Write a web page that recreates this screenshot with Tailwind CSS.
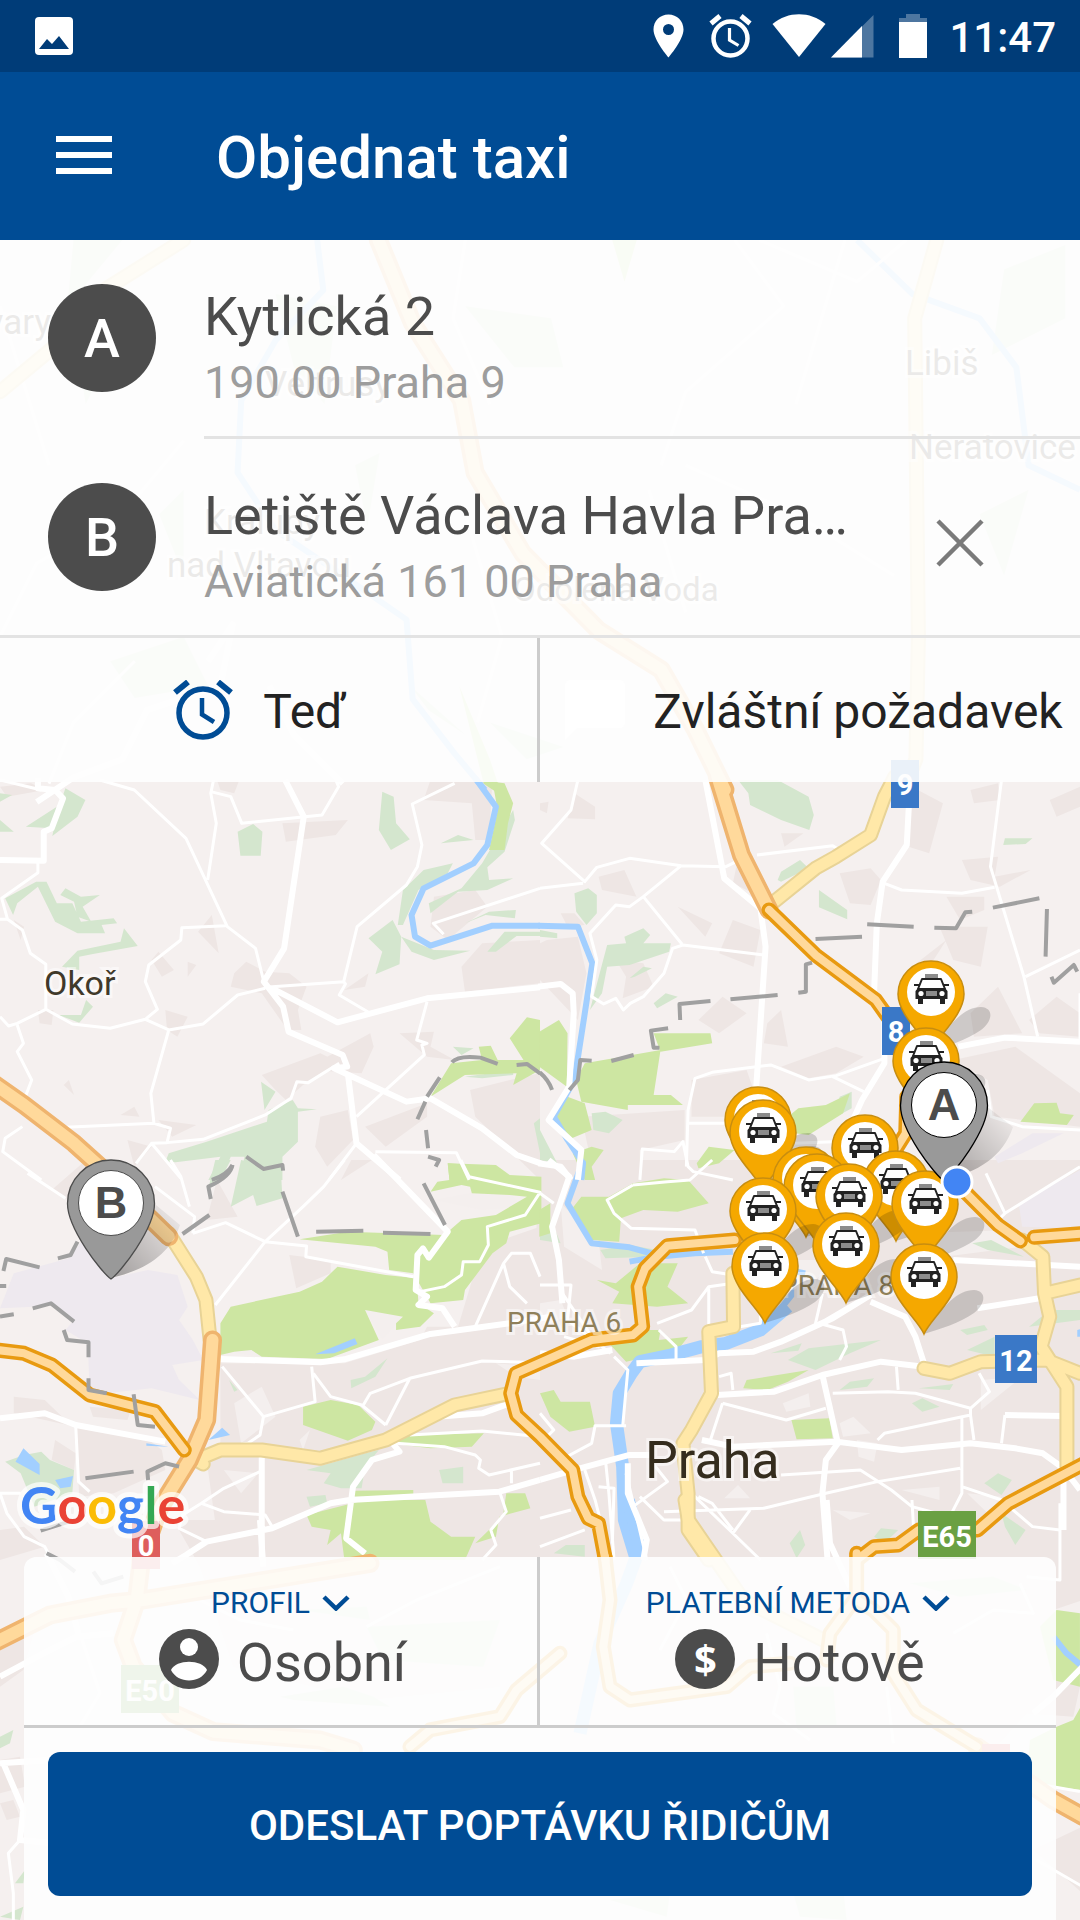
<!DOCTYPE html>
<html lang="cs">

<head>
    <meta charset="UTF-8">
    <meta name="viewport" content="width=device-width, initial-scale=1.0">
    <title>Objednat taxi</title>
    <script src="https://cdn.jsdelivr.net/npm/@tailwindcss/browser@4"></script>
</head>

<body class="flex min-h-screen flex-col font-['Roboto',sans-serif] text-[#4c4c4c]">

    <!-- status bar -->
    <div class="flex h-[72px] items-center bg-[#003c78] pr-6 pl-[35px] text-white">
        <svg class="h-[38px] w-[38px]" viewBox="0 0 38 38">
            <rect width="38" height="38" rx="4" fill="#fff" />
            <path d="M4 32L12 22L17 27L24 19L34 32Z" fill="#003c78" />
        </svg>
        <div class="ml-auto flex items-center">
            <svg class="h-11 w-[31px]" viewBox="0 0 31 44">
                <path fill="#fff" fill-rule="evenodd"
                    d="M15.500 .5C7 .5 .5 7 .5 15.500C.5 26 15.500 43.500 15.500 43.500S30.500 26 30.500 15.500C30.500 7 24 .5 15.500 .5ZM15.500 10A5.500 5.500 0 1 1 15.500 21A5.500 5.500 0 1 1 15.500 10Z" />
            </svg>
            <svg class="ml-[25px] h-11 w-[43px]" viewBox="0 0 43 44" fill="none" stroke="#fff">
                <circle cx="21.500" cy="24.500" r="17" stroke-width="4.500" />
                <path d="M2 9.500L11 2M41 9.500L32 2" stroke-width="5" />
                <path d="M20.500 14V26L29.500 31.500" stroke-width="3.200" />
            </svg>
            <svg class="ml-5 h-11 w-[54px]" viewBox="0 0 54 44">
                <path d="M.5 10C16 -3 38 -3 53.500 10L27 43Z" fill="#fff" />
            </svg>
            <svg class="ml-1 h-11 w-[44px]" viewBox="0 0 44 44">
                <path d="M1 43.500L43.500 1V43.500Z" fill="#fff" fill-opacity=".3" />
                <path d="M1 43.500L32 12V43.500Z" fill="#fff" />
            </svg>
            <svg class="ml-[25px] h-11 w-7" viewBox="0 0 28 44">
                <path d="M7 0H21V4H28V9H0V4H7Z" fill="#fff" fill-opacity=".3" />
                <path d="M0 8H28V44H0Z" fill="#fff" />
            </svg>
            <span class="ml-[22px] pt-1 text-[42px] leading-[48px] font-medium">11:47</span>
        </div>
    </div>

    <!-- app bar -->
    <header class="flex h-[168px] items-center bg-[#004c95] px-14 text-white">
        <button type="button" aria-label="Menu" class="flex w-14 flex-col gap-[10px] pb-[2px]">
            <span class="h-[6px] w-full bg-white"></span>
            <span class="h-[6px] w-full bg-white"></span>
            <span class="h-[6px] w-full bg-white"></span>
        </button>
        <h1 class="ml-[104px] pt-1 text-[60px] leading-[72px] font-medium">Objednat taxi</h1>
    </header>

    <main class="relative flex flex-1 flex-col justify-between overflow-hidden bg-[#f5f0ef]">
        <svg id="map" class="absolute inset-0 h-full w-full" viewBox="0 240 1080 1680"
            preserveAspectRatio="xMidYMin slice" role="img" aria-label="Mapa">
            <defs>
                <g id="shadow">
                    <path d="M0 0C20 -30 34 -44 50 -44C64 -43 61 -29 50 -21C36 -11 16 -5 0 0Z" fill="#000"
                        fill-opacity=".16" />
                </g>
                <g id="taxi">
                    <path d="M0 0C-6 -14 -33 -36 -33 -57A33 33 0 0 1 33 -57C33 -36 6 -14 0 0Z" fill="#f5a800"
                        stroke="#c78d10" stroke-width="1.500" />
                    <circle cy="-59" r="24" fill="#fff" />
                    <path d="M-6 -77H7V-73H-6Z" fill="#8c8c8c" />
                    <path d="M-9 -72H10L14 -62H-13Z" fill="#fff" stroke="#222" stroke-width="2" stroke-linejoin="round" />
                    <path d="M-17 -67H-12V-65H-17ZM13 -67H18V-65H13Z" fill="#222" />
                    <path
                        d="M-13 -63H14L16.500 -60V-52H14V-47H9V-52H-8V-47H-13V-52H-15.500V-60Z"
                        fill="#222" />
                    <path d="M-5 -60H6V-55H-5Z" fill="#8c8c8c" />
                    <circle cx="-10" cy="-57.500" r="2.600" fill="#fff" />
                    <circle cx="11" cy="-57.500" r="2.600" fill="#fff" />
                </g>
                <g id="pin">
                    <path
                        d="M0 0C-9 -6 -43.500 -50 -43.500 -75.500A43.500 43.500 0 0 1 43.500 -75.500C43.500 -50 9 -6 0 0Z"
                        fill="#999" stroke-width="1.300" />
                    <circle cy="-76" r="32.500" fill="#fff" />
                </g>
                <linearGradient id="fade" x1="0" y1="1" x2="1" y2="0">
                    <stop offset="0" stop-color="#000" stop-opacity=".35" />
                    <stop offset="1" stop-color="#000" stop-opacity="0" />
                </linearGradient>
            </defs>

            <g id="land"></g>
            <g id="roads" fill="none" stroke-linejoin="round"></g>

            <!-- road shields -->
            <g class="font-bold" font-size="29" fill="#fff" text-anchor="middle">
                <path d="M891 760h28v48h-28zM882 1007h28v48h-28zM995 1335h42v48h-42z" fill="#3a78c7" />
                <path d="M918 1511h58v48h-58zM121 1665h58v48h-58z" fill="#6aa043" />
                <path d="M132 1521h28v48h-28zM982 1744h28v48h-28z" fill="#de5e5c" />
                <text x="905" y="795">9</text>
                <text x="896" y="1042">8</text>
                <text x="1016" y="1371">12</text>
                <text x="947" y="1547">E65</text>
                <text x="150" y="1701">E50</text>
                <text x="146" y="1556">0</text>
            </g>

            <!-- place names -->
            <g font-size="35" fill="#40392a" stroke="#fff" stroke-opacity=".5" stroke-width="6" paint-order="stroke">
                <text x="-22" y="334">lvary</text>
                <text x="265" y="396">Veltrusy</text>
                <text x="905" y="375">Libiš</text>
                <text x="909" y="459">Neratovice</text>
                <text x="204" y="534">Kralupy</text>
                <text x="167" y="577">nad Vltavou</text>
                <text x="513" y="601" font-size="33">Odolena Voda</text>
                <text x="44" y="995" font-size="34">Okoř</text>
                <text x="645" y="1478" font-size="52" fill="#352d1e">Praha</text>
                <text x="507" y="1332" font-size="28" fill="#8f8059">PRAHA 6</text>
                <text x="780" y="1295" font-size="28" fill="#8f8059">PRAHA 8</text>
            </g>

            <text x="20" y="1524" font-size="52" stroke="#fff" stroke-opacity=".7" stroke-width="10"
                stroke-linejoin="round" paint-order="stroke" class="font-['Lato',sans-serif] font-bold"><tspan
                    fill="#4285f4">G</tspan><tspan fill="#ea4335">o</tspan><tspan fill="#fbbc05">o</tspan><tspan
                    fill="#4285f4">g</tspan><tspan fill="#34a853">l</tspan><tspan fill="#ea4335">e</tspan></text>

            <g id="taxis"></g>

            <!-- start and destination -->
            <g font-size="45" fill="#4c4c4c" text-anchor="middle" class="font-['Liberation_Sans',sans-serif] font-bold">
                <path d="M111 1278C135 1245 140 1225 150 1200L180 1225C170 1255 145 1270 111 1278Z"
                    fill="url(#fade)" />
                <path d="M944 1180C968 1147 975 1127 985 1105L1013 1127C1003 1157 978 1172 944 1180Z"
                    fill="url(#fade)" />
                <use href="#pin" x="111" y="1279" stroke="#4c4c4c" />
                <text x="111" y="1218">B</text>
                <use href="#pin" x="944" y="1181" stroke="#000" />
                <text x="944" y="1120">A</text>
            </g>
            <circle cx="957" cy="1182" r="15" fill="#4285f4" stroke="#fff" stroke-width="3" />
        </svg>

        <!-- route -->
        <section class="relative bg-[#fefefe]/90">
            <div class="flex pl-12">
                <span
                    class="mt-11 flex h-[108px] w-[108px] shrink-0 items-center justify-center rounded-full bg-[#4c4c4c] text-[54px] font-medium text-white">A</span>
                <button type="button"
                    class="ml-12 h-[199px] min-w-0 flex-1 border-b-3 border-[#e3e3e3] pt-11 pb-[23px] text-left">
                    <span class="block truncate text-[54px] leading-[66px]">Kytlická 2</span>
                    <span class="block truncate text-[45px] leading-[66px] text-[#9d9d9d]">190 00 Praha 9</span>
                </button>
            </div>
            <div class="flex border-b-3 border-[#e3e3e3] pl-12">
                <span
                    class="mt-11 flex h-[108px] w-[108px] shrink-0 items-center justify-center rounded-full bg-[#4c4c4c] text-[54px] font-medium text-white">B</span>
                <button type="button" class="ml-12 h-[196px] min-w-0 flex-1 pt-11 pb-5 text-left">
                    <span class="block truncate text-[54px] leading-[66px]">Letiště Václava Havla Praha</span>
                    <span class="block truncate text-[45px] leading-[66px] text-[#9d9d9d]">Aviatická 161 00 Praha</span>
                </button>
                <button type="button" aria-label="Smazat cíl"
                    class="flex w-[228px] shrink-0 items-center justify-center pt-3 pr-3">
                    <svg class="h-12 w-12" viewBox="0 0 48 48" fill="none" stroke="#7a7a7a" stroke-width="4.500">
                        <path d="M2 2L46 46M46 2L2 46" />
                    </svg>
                </button>
            </div>
            <div class="grid grid-cols-2 text-[48px] leading-[60px] text-[#222]">
                <button type="button"
                    class="flex h-36 items-center justify-center gap-[30px] border-r-3 border-[#ccc] pr-[18px]">
                    <svg class="h-[60px] w-[60px]" viewBox="0 0 60 60" fill="none" stroke="#004c95">
                        <circle cx="30" cy="33" r="24" stroke-width="5.500" />
                        <path d="M2 12.500L15 2M58 12.500L45 2" stroke-width="6" />
                        <path d="M29 18V34.500L41 42" stroke-width="4.500" />
                    </svg>
                    <span class="pt-1">Teď</span>
                </button>
                <button type="button" class="flex h-36 items-center justify-center gap-[28px] pl-2 whitespace-nowrap">
                    <svg class="h-[60px] w-[60px]" viewBox="0 0 60 60" fill="#fff">
                        <path d="M6 0H54Q60 0 60 6V42Q60 48 54 48H12L0 60V6Q0 0 6 0Z" />
                    </svg>
                    <span class="pt-1">Zvláštní požadavek</span>
                </button>
            </div>
        </section>

        <!-- order card -->
        <section class="relative mx-6 rounded-t-xl bg-[#fefefe]/90">
            <div class="grid grid-cols-2 border-b-3 border-[#ccc]">
                <button type="button" class="flex h-[168px] flex-col items-center border-r-3 border-[#ccc] pt-7">
                    <span class="flex items-center gap-3 text-[30px] leading-9 text-[#004c95]">PROFIL
                        <svg class="h-4 w-7" viewBox="0 0 28 16" fill="none" stroke="#004c95" stroke-width="4.500">
                            <path d="M2 2L14 13.500L26 2" />
                        </svg>
                    </span>
                    <span class="mt-1 flex items-center gap-[18px] pl-1 text-[54px] leading-[60px]">
                        <svg class="h-[60px] w-[60px]" viewBox="0 0 60 60">
                            <circle cx="30" cy="30" r="30" fill="#4c4c4c" />
                            <circle cx="30" cy="18" r="9" fill="#fff" />
                            <path d="M12 41C17 30 43 30 48 41C41 55 19 55 12 41Z" fill="#fff" />
                        </svg>
                        <span class="pt-2">Osobní</span>
                    </span>
                </button>
                <button type="button" class="flex h-[168px] flex-col items-center pt-7">
                    <span class="flex items-center gap-3 text-[30px] leading-9 text-[#004c95]">PLATEBNÍ METODA
                        <svg class="h-4 w-7" viewBox="0 0 28 16" fill="none" stroke="#004c95" stroke-width="4.500">
                            <path d="M2 2L14 13.500L26 2" />
                        </svg>
                    </span>
                    <span class="mt-1 flex items-center gap-[18px] pl-1 text-[54px] leading-[60px]">
                        <span
                            class="flex h-[60px] w-[60px] items-center justify-center rounded-full bg-[#4c4c4c] font-['Open_Sans',sans-serif] text-[40px] font-bold text-white">$</span>
                        <span class="pt-2">Hotově</span>
                    </span>
                </button>
            </div>
            <div class="p-6">
                <button type="button"
                    class="h-36 w-full rounded-xl bg-[#004c95] pt-1 text-[42px] leading-[48px] font-medium text-white">ODESLAT
                    POPTÁVKU ŘIDIČŮM</button>
            </div>
        </section>
    </main>

</body>
<script>
    let land = document.querySelector("#land")
    let roads = document.querySelector("#roads")
    let taxis = document.querySelector("#taxis")

    // the map is cut into sheets, each with its own grid
    let sheets = {
        top: "translate(0 0) scale(1.2245)",
        nw: "translate(0 780) scale(.3444 .3333)",
        ne: "translate(540 780) scale(.3444 .3333)",
        sw: "translate(0 1160) scale(.3444 .3333)",
        se: "translate(540 1160) scale(.3444 .3333)",
        bl: "translate(0 1500) scale(.3333)",
        br: "translate(560 1500) scale(.3333)"
    }

    let areas = [
        ["#eee6e4", {
            nw: "M680 580L715 545L770 575L840 580L890 620L865 690L875 750L835 750L760 640L670 620ZM1340 560L1400 490L1568 480L1568 610L1350 635ZM950 830L1075 760L1085 800L1050 880L900 870ZM760 885L930 820L990 850L880 915L830 960L800 930ZM1365 930L1520 890L1568 880L1568 1200L1380 1010ZM930 1010L1010 990L1025 1080L950 1160L915 1100ZM1250 0L1430 0L1420 180L1380 180L1370 70L1230 60ZM1250 440L1260 350L1380 330L1415 380L1300 480ZM0 20L90 10L130 30L20 50ZM1060 1040L1240 970L1240 1010L1120 1100ZM830 185L820 130L1010 120L975 165ZM480 690L545 710L515 770L485 750ZM575 455L615 405L635 520ZM370 1080L440 1100L390 1160ZM545 545L570 555L545 590ZM440 540L460 515L505 570L470 590ZM185 915L200 900L215 945ZM350 1005L390 980L405 1010ZM1160 760L1260 755L1250 800L1320 840L1240 830ZM110 690L155 690L150 735L115 730ZM630 0L695 0L680 40L640 30ZM460 1020L570 1035L500 1070ZM40 420L70 440L60 480ZM1000 630L1070 580L1060 620Z",
            ne: "M870 280L960 265L990 300L960 375L900 370ZM1225 240L1330 230L1320 290L1425 270L1335 320L1250 300ZM1060 10L1170 70L1130 220L1070 200ZM1250 30L1330 10L1335 60L1260 70ZM700 160L765 160L710 200ZM1180 350L1290 350L1290 390L1220 420ZM220 540L300 550L330 620L240 655L250 590ZM60 400L100 400L130 435L80 440ZM20 480L110 470L135 580L110 720L0 600L0 490ZM100 40L160 80L160 118L80 115ZM170 290L245 270L280 350L180 330ZM1160 440L1300 440L1280 560L1200 540ZM1250 700L1330 620L1400 760L1260 770ZM660 730L700 690L720 800L650 790ZM700 860L860 800L940 830L860 880L780 895ZM1200 840L1380 800L1568 940L1568 1040L1320 1010L1300 900ZM440 900L600 870L620 930L540 1010L440 1010ZM120 1010L420 990L420 1080L290 1110L290 1200L160 1200ZM560 420L640 450L620 560L520 520ZM1420 720L1500 650L1568 700L1568 770L1450 760ZM1480 60L1568 20L1568 80L1500 110ZM1080 560L1180 480L1130 560ZM570 260L640 350L560 310ZM400 380L500 430L480 470ZM460 720L530 650L600 700L520 760ZM0 70L25 65L20 100L0 90Z",
            sw: "M640 610L1000 610L1220 540L1240 500L1330 500L1400 260L1568 200L1568 1200L640 1200L600 900L640 870ZM840 285L960 300L960 340L860 385ZM250 0L310 0L200 120L150 90ZM1020 0L1080 0L990 60ZM630 60L690 170L600 180ZM40 710L130 720L200 790L420 830L470 870L480 930L330 1000L230 1010L220 800L40 760ZM160 840L220 880L215 930L150 900ZM70 1100L130 1160L0 1200L0 1110ZM260 740L380 750L370 780L270 770Z",
            se: "M-10 0L1568 0L1568 1200L-10 1200Z",
            bl: "M0 560L70 510L100 400L0 440ZM0 780L60 770L75 860L0 880ZM0 910L40 900L60 950L20 960ZM520 60L1500 60L1500 560L1100 600L700 500L600 200Z",
            br: "M0 100L1568 0L1568 300L1480 330L1560 560L1540 650L1400 640L1300 750L0 750ZM1420 1050L1568 980L1568 1180L1500 1120Z"
        }],
        ["#f4efee", {
            sw: "M1260 120L1460 80L1520 140L1400 150ZM680 730L760 680L800 770L700 850ZM870 840L900 810L880 870ZM1440 610L1568 620L1568 660L1500 650ZM680 580L740 565L765 590ZM1060 450L1170 470L1110 540ZM1000 870L1060 880L960 910ZM650 930L750 940L700 1000Z",
            se: "M705 730L780 700L785 740L715 755ZM870 790L910 770L960 820L880 830ZM535 1015L575 975L610 1015ZM1080 220L1380 210L1400 260L1100 300ZM60 130L170 240L180 330L70 260ZM920 840L980 850L970 905L925 890ZM1280 660L1400 650L1340 700L1280 750ZM1050 990L1160 980L1160 1020ZM850 1050L960 1060L900 1080ZM1240 1000L1340 1010L1300 1060ZM720 300L860 300L800 360L730 340ZM0 430L60 420L80 470L0 500Z"
        }],
        ["#eee9ef", {
            sw: "M0 445L40 340L200 295L240 240L320 355L430 330L515 345L545 440L520 480L560 540L590 600L500 615L520 660L580 720L440 685L310 700L260 690L255 550L190 510L215 480L150 430L100 440Z",
            ne: "M1320 1130L1430 1060L1520 1060L1400 1120L1330 1150Z",
            se: "M1390 130L1568 30L1568 205L1400 200Z"
        }],
        ["#d4e6ce", {
            top: "M60 270L90 290L70 330ZM225 240L275 250L265 330L240 300ZM380 250L450 260L460 300L420 300ZM820 220L870 200L870 260L810 290ZM290 380L310 370L300 430ZM130 420L150 400L150 470ZM800 420L840 400L820 470ZM90 540L150 520L170 560L110 570ZM335 560L380 600L350 580ZM400 590L460 610L430 620ZM55 250L60 196L100 196Z",
            nw: "M190 25L248 60L225 110L152 168L165 100ZM75 140L165 80L150 145ZM0 40L35 45L0 65ZM0 120L40 155L0 155ZM15 355L105 305L135 305L165 370L210 370L235 425L330 415L340 430L295 435L305 460L225 460L160 425L110 320L50 370L38 405ZM190 325L235 350L290 345L240 380L265 425L225 410L215 365L175 345ZM360 445L400 498L270 522L230 530L230 570L180 560L225 512L350 485ZM690 155L735 132L762 155L757 227L698 227ZM1110 35L1143 50L1150 130L1190 178L1135 210L1100 150ZM1170 330L1230 270L1315 250L1300 280L1215 330L1170 435L1155 435ZM1070 475L1140 420L1165 470L1160 553L1090 583L1110 515ZM1245 370L1340 325L1400 250L1490 90L1495 120L1465 215L1415 262L1420 300L1490 295L1415 330L1330 335L1250 400ZM1165 470L1260 510L1365 512L1260 540L1195 515ZM1415 515L1465 455L1568 455L1568 468L1500 468L1440 515ZM758 905L800 935L768 990ZM480 1145L490 1120L600 1085L775 1025L780 990L850 960L865 985L920 988L865 995L865 1085L820 1130L820 1200L695 1200L710 1130L670 1130L640 1200L605 1200L640 1130L510 1147ZM170 705L235 705L250 660L270 680L230 728ZM1280 190L1330 165L1375 180ZM1350 430L1420 395L1498 390L1495 415L1410 405ZM1315 800L1375 805L1340 825ZM1350 890L1490 870L1490 885L1400 895ZM1550 1030L1568 1015L1568 1120Z",
            ne: "M575 0L690 0L780 50L795 105L782 150L700 120L610 75L605 40ZM100 340L140 325L165 345L165 400L135 435L105 395ZM145 690L195 495L250 490L245 470L300 445L320 465L300 490L380 490L375 515L260 555L195 560L180 640ZM690 300L700 275L755 240L780 265L700 305ZM810 330L892 390L892 418L810 382ZM1350 175L1430 175L1410 192L1345 195ZM260 595L300 560L325 565L275 590ZM330 670L365 640L400 650L340 685ZM150 1000L190 995L240 1020L200 1060L155 1050ZM870 950L905 935L905 985L860 1010ZM0 450L50 460L50 475L0 470ZM0 1050L50 1150L0 1140Z",
            sw: "M15 905L70 885L120 875L145 900L215 930L210 1000L100 1040L60 940ZM625 0L670 0L640 60L605 85ZM700 0L720 5L815 20L820 115L745 138L735 105L670 140ZM1018 660L1060 650L1125 595L1090 650L1020 685ZM890 930L1060 880L1100 870L1060 920L1050 985L990 985L940 970L960 940ZM1275 930L1345 920L1345 970L1285 970ZM890 1010L945 1005L950 1030L900 1040ZM665 660L690 690L680 695Z",
            se: "M175 270L260 255L340 270L330 290L190 295ZM1255 250L1310 240L1405 290L1300 270ZM720 600L780 565L990 540L900 580L800 630ZM870 690L900 665L970 655L950 680ZM1080 730L1110 715L1160 740L1110 755ZM1220 510L1290 495L1300 510L1240 525ZM1290 970L1330 940L1370 960L1340 1005ZM725 1150L755 1110L770 1155L745 1195ZM970 1130L990 1105L1040 1110L1000 1150ZM1340 1060L1410 1110L1380 1155L1350 1100ZM1420 500L1480 450L1568 450L1568 480ZM0 150L40 200L60 250L0 240ZM40 1180L75 1155L130 1155L130 1190ZM1100 685L1200 672L1190 690ZM1240 570L1320 530L1320 590ZM670 580L760 550L750 572ZM850 235L900 230L900 290L860 290Z",
            bl: "M0 710L40 690L30 730L0 745ZM45 1150L75 1110L70 1150ZM1100 380L1500 360L1450 500L1150 480ZM840 590L1030 560L1120 590L1170 620L880 600ZM0 1250L70 1220L60 1260ZM900 330L1100 320L1110 360Z",
            br: "M1050 250L1300 230L1400 270L1200 290ZM700 560L820 560L830 680L710 690ZM150 1200L330 1180L320 1250ZM700 1180L850 1170L860 1260L720 1250Z"
        }],
        ["#cde6a2", {
            top: "M500 196L520 196L510 230ZM375 560L400 620L410 650L395 640Z",
            nw: "M1430 5L1465 10L1490 70L1475 130L1465 210L1420 210L1445 90ZM1480 775L1530 712L1568 720L1568 870L1490 915L1500 880L1350 885L1250 950L1310 850L1400 840L1390 800L1425 797L1445 840L1520 840ZM1300 1150L1430 1160L1490 1200L1305 1200Z",
            ne: "M-2 755L55 720L80 760L78 920L-2 860ZM330 760L495 760L500 790L350 815ZM130 850L350 810L330 945L380 945L415 975L255 975L255 990L120 965L105 900ZM30 1030L80 950L130 970L150 1050L80 1080ZM95 1120L150 1100L185 1110L150 1160L160 1200L130 1200ZM720 1010L750 985L830 975L900 940L880 1000L780 1065L740 1060ZM455 1150L490 1100L565 1110L520 1150L460 1165ZM1395 1025L1435 970L1500 968L1510 1000L1550 1005L1530 1035Z",
            sw: "M640 490L670 440L870 395L935 365L980 320L1120 345L1210 355L1215 430L1260 460L1220 500L1150 510L1150 490L1170 470L1060 450L1100 540L950 597L760 590L730 570L680 575L640 585ZM870 238L1010 215L1290 225L1340 180L1440 165L1530 110L1480 105L1370 100L1365 80L1340 75L1250 95L1270 65L1305 60L1300 10L1440 15L1480 45L1572 50L1572 190L1480 215L1470 250L1430 280L1350 390L1345 420L1250 430L1200 340L1130 330L1125 275L1090 260ZM880 740L960 720L1040 735L1090 785L1080 810L1010 842L880 795ZM1130 850L1190 825L1405 820L1370 860L1250 865ZM1025 992L1200 990L1200 1010L1025 1010ZM890 1065L1060 1020L1235 1020L1250 1085L1310 1130L1380 1130L1350 1200L1000 1200L990 1120L950 1155L960 1110L905 1100ZM1380 1150L1460 1070L1470 1000L1525 1000L1540 1045L1450 1070L1440 1130Z",
            se: "M270 70L360 55L430 60L490 130L400 155L300 150L235 175L230 245L150 240L90 150L120 110L200 110ZM-2 150L30 130L30 220L-2 230ZM165 360L220 370L290 310L400 310L370 380L430 430L340 440L210 430L230 395ZM200 550L300 510L350 510L345 540L430 530L400 570L250 605ZM0 700L40 690L60 725L145 725L160 800L85 815L30 770ZM590 685L600 660L780 630L720 665L660 690ZM730 780L840 775L850 835L745 838Z",
            br: "M1490 330L1560 340L1560 560L1480 540L1440 380ZM1540 660L1568 610L1568 870L1400 850L1410 720L1490 680Z"
        }],
        ["#a2cfff", {
            sw: "M915 583L1030 535L1038 552L970 580ZM605 840L645 803L668 825ZM45 905L68 865L115 912L115 945ZM160 960L212 948L205 980L175 985ZM425 850L490 860L425 857Z",
            se: "M738 380L738 410L680 485L640 495L700 430ZM1560 510L1568 508L1568 530L1560 530Z"
        }]
    ]

    // [colour, width, casing colour, casing width, lines per sheet]
    let lines = [
        ["#a2cfff", 6, "", 0, {
            top: "M259 196L264 237L225 278L197 327L194 386L225 433L280 470L332 506L337 571L371 615L396 645M700 196L745 240L800 260L830 300L840 380L882 400",
            nw: "M1380 -5L1440 80L1415 195L1375 250L1230 325L1195 405L1205 470L1250 497L1430 437L1568 437",
            ne: "M-5 437L110 440L152 550L130 700L100 900L40 1010L80 1080L125 1150L120 1200",
            se: "M125 0L80 130L150 250L260 262L340 285M260 305L340 290L450 280L560 275M720 330L770 340",
            br: "M1480 410L1520 460L1568 500"
        }],
        ["#a2cfff", 13, "", 0, {
            se: "M720 440L640 510L540 550L470 560L380 585L290 605L265 640L230 700L222 790L240 920L245 1080L280 1200",
            br: "M205 0L240 140L200 250L120 430L60 700"
        }],
        ["#fff", 3, "", 0, {
            top: "M0 250L40 380M380 196L370 260L400 330M600 196L640 250L560 320L540 380M690 196L650 330M380 420L410 520L390 590M560 380L650 420L730 470M530 400L560 500M150 360L100 420L30 460L0 520M110 540L60 590L40 640M620 196L700 230L740 196",
            nw: "M290 0L390 30L540 175L660 440L742 505L766 605M620 0L612 40L628 130L603 300M612 35L670 50L702 130L935 105L983 20L975 0M1320 10L1197 72L1225 195L1212 260L1180 315L1037 440L998 605L1003 612L985 645L1075 700M770 622L998 605M655 437L528 443L525 480L432 555L422 605L457 688L422 718L490 750L590 732L690 645L770 625M422 718L320 745L210 732L133 688L50 730L25 738L0 710M0 418L22 418L65 450L88 520L133 553L133 688M110 245L110 278L5 355L22 418M50 735L68 790L50 815L92 900L70 960M490 750L438 940L447 1030L190 1042M447 1030L495 1045L485 1088L440 1090L395 1150M440 1090L525 1195M485 1088L590 1078L770 1005L845 955L862 905L895 908L985 850M1240 665L1210 780L1240 790L1225 795L1232 825L1035 1010M1568 325L1258 430L1288 463M1035 1090L955 1200M1090 1115L1325 1118L1362 1200M65 1040L15 1075L8 1115L120 1200M0 0L120 30",
            ne: "M110 0L90 90L5 190L130 305L165 262L260 235L410 257L540 260L570 245M630 225L850 197L870 210M0 325L125 310M410 257L300 350L260 380L220 375L145 460L165 540L150 650L185 672L220 655L242 690L262 670L300 650L360 580L385 505L415 495L650 525M300 350L412 492M1340 0L1308 260L1405 590L1445 770M1000 310L1050 330L1225 340L1320 322M1410 590L1568 510M425 1160L430 990L450 895L500 877L670 855L780 900L860 887L1000 835M850 890L940 935M430 1030L540 1030M290 1200L297 1107L390 1115L415 1085L430 1160L445 1175L560 1200M1300 930L1310 1010L1400 1040L1568 1050M740 1090L850 1085M1568 640L1568 780",
            sw: "M495 0L525 50L550 140M450 80L565 170L560 220M560 220L655 188L770 245L625 435M770 245L890 258L888 290L1200 350M770 245L880 140L940 80L1000 0M1338 0L1362 50L1568 97L1525 165L1415 200L1418 255L1393 305L1345 305L1340 345L1290 380L1220 395M80 40L190 115M645 620L765 770L915 725L905 620M765 770L755 825L720 850L600 870M910 640L960 710L1050 735L1120 795M1055 735L1075 700L1190 655L1400 603L1568 608M1190 655L1120 795M1190 825L1400 813L1568 830M1150 850L1290 860L1380 885L1395 900L1390 925L1420 945L1568 910M1380 500L1462 310L1485 280L1540 280L1568 350M1462 310L1480 380L1530 430M220 800L228 965L260 995M755 935L650 985L585 1030L530 1065L520 1105L600 1145M585 1030L650 1055L770 1065L790 1100M0 1000L60 1000M0 1000L20 1060L70 1130L130 1160L150 1200M1452 1000L1470 1055L1425 1110L1440 1155L1400 1200M1485 930L1485 970",
            se: "M270 75L370 65L435 60L500 0M270 75L195 120L215 160L265 205L450 210L475 280M0 375L90 375L80 480L205 580M65 400L170 560L70 530M340 490L440 450L490 380L560 370M345 510L395 560L395 600M480 290L500 335L560 345M490 380L490 500M850 700L1010 695L1090 700L1250 745L1305 695L1275 640M1035 620L1040 690M530 730L715 780L830 745M530 730L495 840M520 650L555 640L560 690M980 840L1000 820L1250 765L1250 740M1225 770L1225 1000L1190 1070L1080 1040L1020 990L930 930L700 945M1250 765L1260 840M1340 850L1350 765M830 1000L980 965L1220 925M360 1055L650 1045L830 1000M1080 1020L1085 1110M1225 980L1340 1020L1430 1100L1510 1110M440 1000L560 1120L640 1200M460 1010L500 1030L560 1110M560 1120L610 1050M270 1040L370 965L320 900M290 1010L360 1080L420 1080M0 760L40 810L0 850M60 900L150 850L160 797L250 797M215 590L255 630L240 800M190 900L200 1000L215 1200M130 930L160 1020L200 1180M170 980L215 985L210 1150M0 1075L90 1050M0 1160L130 1110M1350 160L1490 70L1568 20M1295 40L1350 160L1320 190M810 490L880 510L890 560L870 600M820 400L800 490L830 495M0 100L40 130M250 940L310 1200M580 500L640 490L640 450",
            bl: "M240 400L300 580L240 680M600 300L720 360L880 390M1100 380L1250 300L1500 200M60 1020L25 1060L40 1180L40 1260",
            br: "M300 450L380 300L330 200M620 400L660 560L640 640L750 720M980 560L1000 730M1180 400L1300 330L1420 340L1380 250M1420 850L1560 875M1430 1080L1568 1160M1500 10L1500 240L1400 230"
        }],
        ["#fff", 6, "", 0, {
            top: "M170 540L190 510L180 560L120 580L100 620L60 635L30 655M220 560L240 600L280 640",
            nw: "M110 -5L110 25L160 30L183 55L150 145L127 155L127 242L0 240M828 0L882 110L825 505L766 605L822 680L838 755L995 825L1008 860L970 865L1180 965L1250 955L1400 1045L1500 1125L1570 1150M790 625L980 727L1240 655L1568 622M1010 880L1035 1090L1160 1200",
            ne: "M480 0L535 295L640 385L655 500L628 920M1075 0L1065 195L995 305L978 430L970 640L1000 700L1000 850L935 960L900 1040M1215 800L1350 773L1568 785M-5 620L60 612L95 640L98 700L85 920L25 1020L120 1110L110 1200M-5 1150L60 1160L90 1200",
            sw: "M1085 -15L1300 215L1245 293L1228 265L1212 285L1207 390L1240 410L1215 435L1285 445L1320 500M640 597L930 607L1000 598L1250 522L1480 490L1600 470M0 775L130 760L220 795L480 845M760 890L760 1200M1568 960L1450 995L1015 1020L960 1030L790 1105L600 1145L540 1185L500 1210M1140 850L1160 875L1080 900L1025 980L1005 1135L1060 1180M1270 770L1400 760L1480 730",
            se: "M25 0L85 50L35 200L55 300L65 430M0 580L100 590L210 570M280 610L480 600L520 580L620 575L700 545L850 475L960 405M820 490L960 405M960 425L1060 470L1090 530L1115 610M515 705L680 695L820 645L990 605L1115 620M820 645L865 850L830 900L820 1000L835 1200M470 840L560 860L860 845L1050 870L1250 850L1380 865L1460 880L1520 925L1568 990M1350 765L1520 768M0 960L100 930L260 885L320 885M1520 940L1520 1110M1200 300L1568 320M1270 445L1450 415M255 910L255 1000L310 1140L300 1200",
            bl: "M0 530L130 460L230 410L340 400M0 790L150 780M10 790L70 930L60 1020L160 1030M140 160L205 290L235 400M780 60L790 200",
            br: "M800 0L810 130L870 260M1568 500L1480 590L1420 640"
        }],
        ["#ffe8a8", 11, "#e8d396", 15, {
            top: "M765 196L747 260L750 520L748 620L738 645M150 196L80 240L60 270L0 320",
            ne: "M1030 -10L1000 50L960 165L860 230L800 265L680 365",
            sw: "M490 220L570 350L598 420L610 540M590 912L570 900L640 870L760 870L930 895L1120 840L1320 735L1480 700",
            se: "M560 340L562 500L490 515L498 700L440 810L415 850L430 1000L430 1110L490 1200M1400 240L1460 290L1465 400L1480 470L1455 560L1530 680L1530 920M1465 400L1568 375M1115 625L1190 640L1280 605L1470 600L1568 640",
            br: "M375 0L385 60L440 140L550 300L790 420"
        }],
        ["#ffd99b", 12, "#efb46e", 19, {
            top: "M309 196L337 264L377 327L388 386L427 452L489 515L540 547L568 596L592 645",
            ne: "M515 -10L585 225L665 390",
            sw: "M-20 -230L70 -165L215 -50L290 20L400 140L490 230M617 540L600 780L550 900L460 1050L410 1200",
            bl: "M430 130L410 300L370 420L400 500L520 640L640 695L960 720L1060 750M-20 430L150 345L330 310L430 300L1110 190",
            br: "M1250 740L1480 900L1570 950"
        }],
        ["#ffd99b", 8, "#e89a10", 15, {
            ne: "M665 390L800 525L975 660L1030 740M1065 950L1062 1060L1020 1130",
            sw: "M-10 570L70 580L150 615L260 705L450 755L535 870",
            se: "M565 240L370 257L305 325L285 380L298 500L270 525L150 540L-70 640L-85 700L-68 765L0 830L95 930L110 1010L140 1075L170 1090L190 1200M1200 60L1330 195L1395 243M1435 232L1580 220M1600 900L1360 1030L1270 1110L1100 1110L1040 1155L970 1160L920 1200",
            bl: "M1230 740L1290 690L1500 650L1550 570L1680 460",
            br: "M135 170L150 300L130 440L150 560L210 600L500 560L570 500L690 490M890 160L890 290L810 400L800 480M890 300L940 330L1000 390L1000 520L1070 630L1250 740"
        }],
        ["#a0a0a0", 4, "", 0, {
            nw: "M1312 847Q1330 825 1395 833L1445 852M1500 855L1530 852L1568 880M1277 892L1240 950M1235 965L1212 1018M1237 1050L1243 1105M1243 1130L1275 1140L1265 1160M715 1130L765 1167L820 1155L822 1172M675 1155Q660 1185 615 1200",
            ne: "M800 477L935 470M950 433L1085 440M1145 443L1208 445L1235 397L1255 395M1315 383L1450 355M1472 387L1468 530M1485 590L1492 608L1550 555L1560 575M790 548L772 553L772 635L750 638M690 645L553 658M495 663L405 672L407 720M372 745L322 752L330 803L347 803M272 825L207 843M150 842L117 840L110 900L85 930M0 878Q25 900 35 930",
            sw: "M10 333L18 297L115 322M168 295L205 285L225 245M95 445L148 430L215 485M0 470L40 463M0 378L18 378M185 510L195 540L257 547L257 592M257 655L257 690L310 700M388 703L400 795L450 800M248 955L388 935M430 960L428 935L480 910L520 920M675 15Q670 50 605 80L612 117M608 165L530 222M820 95L865 230M918 215L1055 212M1112 218L1250 222M1230 70L1292 195M118 1112L200 1085",
            bl: "M140 160L180 180L225 215M280 215L305 250L370 230"
        }]
    ]

    let draw = (box, paths, attrs) => {
        Object.keys(paths).forEach(s => {
            box.innerHTML += `<path transform="${sheets[s]}" d="${paths[s]}" vector-effect="non-scaling-stroke" ${attrs} />`
        })
    }

    areas.forEach(([fill, paths]) => draw(land, paths, `fill="${fill}"`))

    lines.forEach(([color, width, casing, casingWidth, paths]) => {
        if (casing) {
            draw(roads, paths, `stroke="${casing}" stroke-width="${casingWidth}" stroke-linecap="round"`)
        }
        draw(roads, paths, `stroke="${color}" stroke-width="${width}"` + (casing ? ` stroke-linecap="round"` : ""))
    })

    // tips of the taxi pins, back to front
    let cars = [
        [931, 1051], [926, 1118], [758, 1177], [763, 1190], [865, 1205], [806, 1237], [817, 1244],
        [896, 1241], [849, 1254], [763, 1268], [925, 1261], [846, 1303], [765, 1323], [924, 1334]
    ]
    cars.forEach(([x, y]) => {
        taxis.innerHTML += `<use href="#shadow" x="${x}" y="${y}" /><use href="#taxi" x="${x}" y="${y}" />`
    })
</script>

</html>
